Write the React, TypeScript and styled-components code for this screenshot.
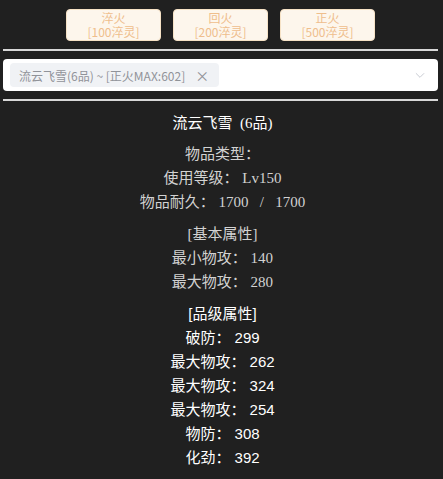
import React from "react";
import styled, { createGlobalStyle } from "styled-components";

const Global = createGlobalStyle`
  html, body { margin: 0; padding: 0; background: #202020; }
  body { font-family: "Liberation Serif", "Noto Sans CJK SC", serif; }
`;

const Page = styled.div`
  width: 435px;
  margin-left: 3px;
  padding-top: 9px;
`;

const Toolbar = styled.div`
  display: flex;
  justify-content: center;
  gap: 12px;
`;

const RefineButton = styled.button`
  width: 95px;
  height: 32px;
  box-sizing: border-box;
  background: #fdf6ec;
  border: 1px solid #f6e2c6;
  border-radius: 4px;
  color: #efbe8c;
  font-family: "Noto Sans CJK SC", sans-serif;
  font-size: 12px;
  line-height: 14px;
  padding: 0;
  display: flex;
  flex-direction: column;
  align-items: center;
  justify-content: center;
  cursor: not-allowed;
`;

const Rule = styled.div`
  height: 2px;
  background: #d8d8d8;
  margin: 8px 0;
`;

const Select = styled.div`
  height: 32px;
  box-sizing: border-box;
  background: #fff;
  border-radius: 4px;
  display: flex;
  align-items: center;
  padding: 0 11px 0 7px;
`;

const Tag = styled.span`
  height: 24px;
  display: inline-flex;
  align-items: center;
  gap: 10px;
  background: #f0f2f5;
  color: #909399;
  border-radius: 4px;
  padding: 0 10px 0 9px;
  font-family: "Noto Sans CJK SC", sans-serif;
  font-size: 12px;
`;

const Close = styled.span`
  font-size: 14px;
  color: #909399;
  line-height: 1;
`;

const Spacer = styled.div`
  flex: 1;
`;

const Chevron = styled.svg`
  width: 14px;
  height: 14px;
  color: #c0c4cc;
`;

const Info = styled.div`
  display: flex;
  flex-direction: column;
  align-items: center;
  padding-top: 2px;
  padding-left: 4px;
`;

const Title = styled.div`
  color: #ffffff;
  font-size: 15px;
  line-height: 24px;
  margin-bottom: 7px;
  white-space: pre;
`;

const Section = styled.div<{ $bright?: boolean }>`
  display: flex;
  flex-direction: column;
  align-items: center;
  margin-bottom: 8px;
  color: ${(p) => (p.$bright ? "#ffffff" : "#d2d2d2")};
  font-family: ${(p) =>
    p.$bright
      ? `"Liberation Sans", "Noto Sans CJK SC", sans-serif`
      : `"Liberation Serif", "Noto Sans CJK SC", serif`};
  font-size: 15px;
  line-height: 24px;
  white-space: pre;
`;

const Line = styled.div``;

const buttons = [
  ["淬火", "[100淬灵]"],
  ["回火", "[200淬灵]"],
  ["正火", "[500淬灵]"],
];

export default function App() {
  return (
    <>
      <Global />
      <Page>
        <Toolbar>
          {buttons.map(([a, b]) => (
            <RefineButton key={a} disabled>
              <span>{a}</span>
              <span>{b}</span>
            </RefineButton>
          ))}
        </Toolbar>
        <Rule />
        <Select>
          <Tag>
            流云飞雪(6品) ~ [正火MAX:602]
            <Close>×</Close>
          </Tag>
          <Spacer />
          <Chevron viewBox="0 0 24 24" fill="none" stroke="currentColor" strokeWidth="1.5">
            <path d="M5 9l7 7 7-7" />
          </Chevron>
        </Select>
        <Rule />
        <Info>
          <Title>流云飞雪  (6品)</Title>
          <Section>
            <Line>物品类型：</Line>
            <Line>使用等级： Lv150</Line>
            <Line>物品耐久： 1700   /   1700</Line>
          </Section>
          <Section>
            <Line>[基本属性]</Line>
            <Line>最小物攻： 140</Line>
            <Line>最大物攻： 280</Line>
          </Section>
          <Section $bright>
            <Line>[品级属性]</Line>
            <Line>破防： 299</Line>
            <Line>最大物攻： 262</Line>
            <Line>最大物攻： 324</Line>
            <Line>最大物攻： 254</Line>
            <Line>物防： 308</Line>
            <Line>化劲： 392</Line>
          </Section>
        </Info>
      </Page>
    </>
  );
}
